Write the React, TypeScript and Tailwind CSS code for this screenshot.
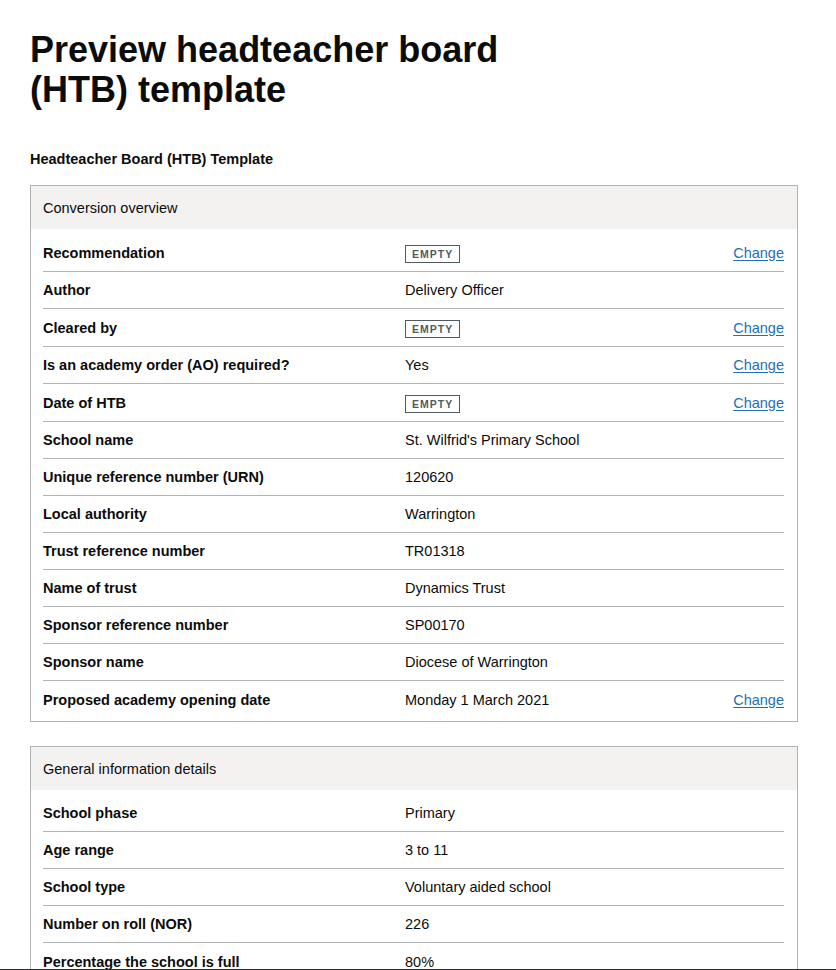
import React from 'react';

type Row = { key: string; value?: string; empty?: boolean; change?: boolean };

const OVERVIEW: Row[] = [
  { key: 'Recommendation', empty: true, change: true },
  { key: 'Author', value: 'Delivery Officer' },
  { key: 'Cleared by', empty: true, change: true },
  { key: 'Is an academy order (AO) required?', value: 'Yes', change: true },
  { key: 'Date of HTB', empty: true, change: true },
  { key: 'School name', value: "St. Wilfrid's Primary School" },
  { key: 'Unique reference number (URN)', value: '120620' },
  { key: 'Local authority', value: 'Warrington' },
  { key: 'Trust reference number', value: 'TR01318' },
  { key: 'Name of trust', value: 'Dynamics Trust' },
  { key: 'Sponsor reference number', value: 'SP00170' },
  { key: 'Sponsor name', value: 'Diocese of Warrington' },
  { key: 'Proposed academy opening date', value: 'Monday 1 March 2021', change: true },
];

const GENERAL: Row[] = [
  { key: 'School phase', value: 'Primary' },
  { key: 'Age range', value: '3 to 11' },
  { key: 'School type', value: 'Voluntary aided school' },
  { key: 'Number on roll (NOR)', value: '226' },
  { key: 'Percentage the school is full', value: '80%' },
];

function Tag() {
  return (
    <span className="inline-block border border-[#505a5f] px-[6px] h-[18px] leading-[16px] text-[10.5px] font-bold tracking-[1px] text-[#505a5f] uppercase">
      Empty
    </span>
  );
}

function Card({ title, rows }: { title: string; rows: Row[] }) {
  return (
    <div className="w-[768px] border border-[#b1b4b6]">
      <div className="h-[43px] bg-[#f3f2f1] px-[12px] flex items-center">
        <span>{title}</span>
      </div>
      <dl className="pl-[12px] pr-[13px] pt-[5px] pb-[3px]">
        {rows.map((r, i) => (
          <div
            key={r.key}
            className={`flex items-center ${r.empty ? 'h-[38px]' : 'h-[37px]'} ${i < rows.length - 1 ? 'border-b border-[#b1b4b6]' : ''}`}
          >
            <dt className="w-[362px] font-bold">{r.key}</dt>
            <dd className="flex-1">{r.empty ? <Tag /> : r.value}</dd>
            {r.change && (
              <a href="#" className="text-[#1d70b8] underline underline-offset-[2px]">Change</a>
            )}
          </div>
        ))}
      </dl>
    </div>
  );
}

export default function App() {
  return (
    <div className="min-h-screen bg-white text-[#0b0c0c] text-[14.5px] leading-[20px] font-['Liberation_Sans',Arial,sans-serif] pl-[30px] pt-[30px]">
      <h1 className="text-[36px] leading-[40px] font-bold w-[520px]">Preview headteacher board (HTB) template</h1>
      <p className="mt-[39px] font-bold">Headteacher Board (HTB) Template</p>
      <div className="mt-[16px]">
        <Card title="Conversion overview" rows={OVERVIEW} />
      </div>
      <div className="mt-[24px] pb-10">
        <Card title="General information details" rows={GENERAL} />
      </div>
      <div className="fixed left-0 right-0 bottom-0 h-px bg-[#2b2f31]" />
    </div>
  );
}
